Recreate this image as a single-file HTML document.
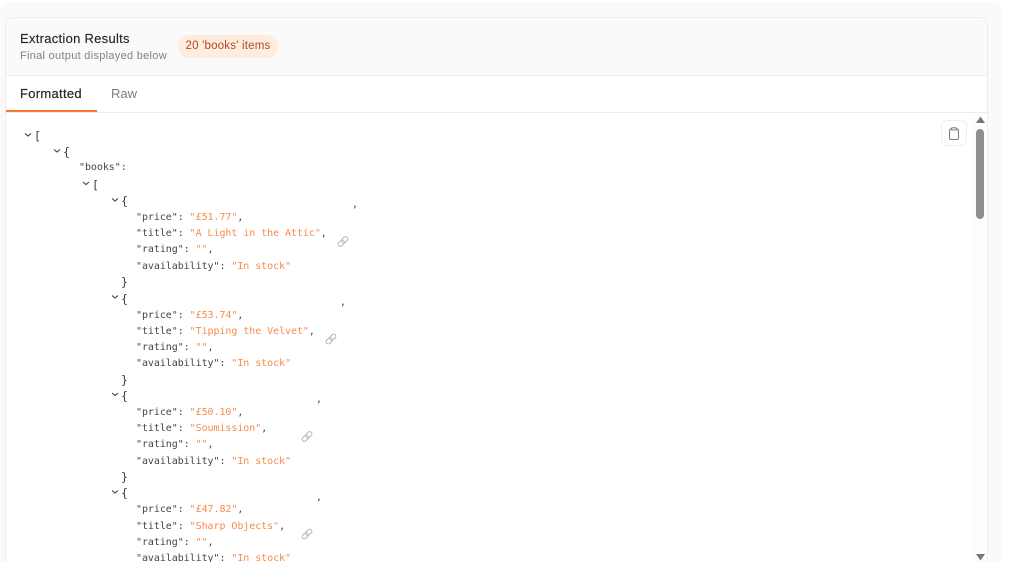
<!DOCTYPE html>
<html><head><meta charset="utf-8"><style>
html,body{margin:0;padding:0;width:1024px;height:562px;overflow:hidden;background:#fff}
body{position:relative;font-family:"Liberation Sans",sans-serif}
.a{position:absolute}
.bg{left:0;top:2px;width:1002px;height:560px;background:#fbfaf9;border-radius:8px 8px 0 0}
.card{left:5px;top:17px;width:981px;height:560px;background:#fff;border:1px solid #ececeb;border-radius:8px;overflow:hidden}
.head{left:0;top:0;width:981px;height:57px;background:#fafafa;border-bottom:1px solid #ececeb}
.tabline{left:0;top:94px;width:981px;height:1px;background:#ececeb}
.l{position:absolute;white-space:pre;font:10px/16px "DejaVu Sans Mono",monospace;letter-spacing:-.06px;color:#3f4650;margin-top:2px}
.b{font-size:11.500px;margin-top:1px;margin-left:-1px;color:#3a3a3a}
.s{color:#f98a4b}
</style></head><body>
<div class="a bg"></div>
<div class="a card">
<div class="a head"></div>
<div class="a tabline"></div>
</div>
<div class="a" style="left:20px;top:30px;font-size:13px;line-height:17px;color:#27272a;letter-spacing:.28px;-webkit-text-stroke:.15px #27272a">Extraction Results</div>
<div class="a" style="left:20px;top:49px;font-size:11px;line-height:15px;color:#80808a;letter-spacing:.29px">Final output displayed below</div>
<div class="a" style="left:178px;top:35px;width:100px;height:23px;border-radius:12px;background:#feecdc;color:#b04a25;font-size:11.500px;line-height:23px;text-align:center;letter-spacing:.2px">20 'books' items</div>
<div class="a" style="left:20px;top:85px;font-size:13px;line-height:17px;color:#27272a;letter-spacing:.3px;-webkit-text-stroke:.2px #27272a">Formatted</div>
<div class="a" style="left:111px;top:85px;font-size:13px;line-height:17px;color:#7b7b85">Raw</div>
<div class="a" style="left:6px;top:110px;width:91px;height:2px;background:#f97a2e"></div>

<svg class="a" style="left:0;top:0" width="1024" height="562" fill="none" stroke="#3f3f46" stroke-width="1.1">
<path d="M25 133.500l3 2.500 3-2.500M54 149.500l3 2.500 3-2.500M83 182l3 2.500 3-2.500M112 198.500l3 2.500 3-2.500M112 295.500l3 2.500 3-2.500M112 393l3 2.500 3-2.500M112 490.500l3 2.500 3-2.500"/>
</svg>

<div class="l b" style="left:35px;top:127px">[</div>
<div class="l b" style="left:64px;top:143px">{</div>
<div class="l" style="left:79px;top:158px">"books":</div>
<div class="l b" style="left:93px;top:176px">[</div>

<div class="l b" style="left:122px;top:192px">{</div>
<div class="l" style="left:136px;top:207.500px">"price": <span class="s">"£51.77"</span>,</div>
<div class="l" style="left:136px;top:224px">"title": <span class="s">"A Light in the Attic"</span>,</div>
<div class="l" style="left:136px;top:240px">"rating": <span class="s">""</span>,</div>
<div class="l" style="left:136px;top:256.500px">"availability": <span class="s">"In stock"</span></div>
<div class="l b" style="left:122px;top:273px">}</div>
<div class="l" style="left:352px;top:195px">,</div>

<div class="l b" style="left:122px;top:290px">{</div>
<div class="l" style="left:136px;top:305.500px">"price": <span class="s">"£53.74"</span>,</div>
<div class="l" style="left:136px;top:322px">"title": <span class="s">"Tipping the Velvet"</span>,</div>
<div class="l" style="left:136px;top:338px">"rating": <span class="s">""</span>,</div>
<div class="l" style="left:136px;top:354px">"availability": <span class="s">"In stock"</span></div>
<div class="l b" style="left:122px;top:371px">}</div>
<div class="l" style="left:340px;top:293px">,</div>

<div class="l b" style="left:122px;top:387px">{</div>
<div class="l" style="left:136px;top:403px">"price": <span class="s">"£50.10"</span>,</div>
<div class="l" style="left:136px;top:419px">"title": <span class="s">"Soumission"</span>,</div>
<div class="l" style="left:136px;top:435px">"rating": <span class="s">""</span>,</div>
<div class="l" style="left:136px;top:451.500px">"availability": <span class="s">"In stock"</span></div>
<div class="l b" style="left:122px;top:468px">}</div>
<div class="l" style="left:316px;top:390px">,</div>

<div class="l b" style="left:122px;top:484px">{</div>
<div class="l" style="left:136px;top:500px">"price": <span class="s">"£47.82"</span>,</div>
<div class="l" style="left:136px;top:517px">"title": <span class="s">"Sharp Objects"</span>,</div>
<div class="l" style="left:136px;top:533px">"rating": <span class="s">""</span>,</div>
<div class="l" style="left:136px;top:549px">"availability": <span class="s">"In stock"</span></div>
<div class="l" style="left:316px;top:488px">,</div>

<svg class="a" style="left:0;top:0" width="1024" height="562" fill="none" stroke="#b4b4b4" stroke-width="1">
<g transform="translate(343 241.500) rotate(-45)"><rect x="-6" y="-2.200" width="7" height="4.400" rx="2.200"/><rect x="-1" y="-2.200" width="7" height="4.400" rx="2.200"/></g>
<g transform="translate(331 339) rotate(-45)"><rect x="-6" y="-2.200" width="7" height="4.400" rx="2.200"/><rect x="-1" y="-2.200" width="7" height="4.400" rx="2.200"/></g>
<g transform="translate(307 436.500) rotate(-45)"><rect x="-6" y="-2.200" width="7" height="4.400" rx="2.200"/><rect x="-1" y="-2.200" width="7" height="4.400" rx="2.200"/></g>
<g transform="translate(307 534) rotate(-45)"><rect x="-6" y="-2.200" width="7" height="4.400" rx="2.200"/><rect x="-1" y="-2.200" width="7" height="4.400" rx="2.200"/></g>
</svg>

<div class="a" style="left:941px;top:120px;width:24px;height:24px;border:1px solid #efefef;border-radius:6px;background:#fff"></div>
<svg class="a" style="left:941px;top:120px" width="26" height="26" fill="none" stroke="#808080" stroke-width="1.100">
<rect x="8.500" y="9" width="9" height="10.500" rx="1.500"/><rect x="10.500" y="7.800" width="5" height="2.200" rx=".8" fill="#fff"/>
</svg>

<div class="a" style="left:973px;top:113px;width:13px;height:449px;background:#fdfdfd"></div>
<svg class="a" style="left:973px;top:113px" width="14" height="449"><path d="M3 10L7.500 3.500 12 10z" fill="#777"/><path d="M3 441h9l-4.500 6.500z" fill="#777"/></svg>
<div class="a" style="left:976px;top:129px;width:8px;height:90px;border-radius:4px;background:#8f8f8f"></div>
</body></html>
